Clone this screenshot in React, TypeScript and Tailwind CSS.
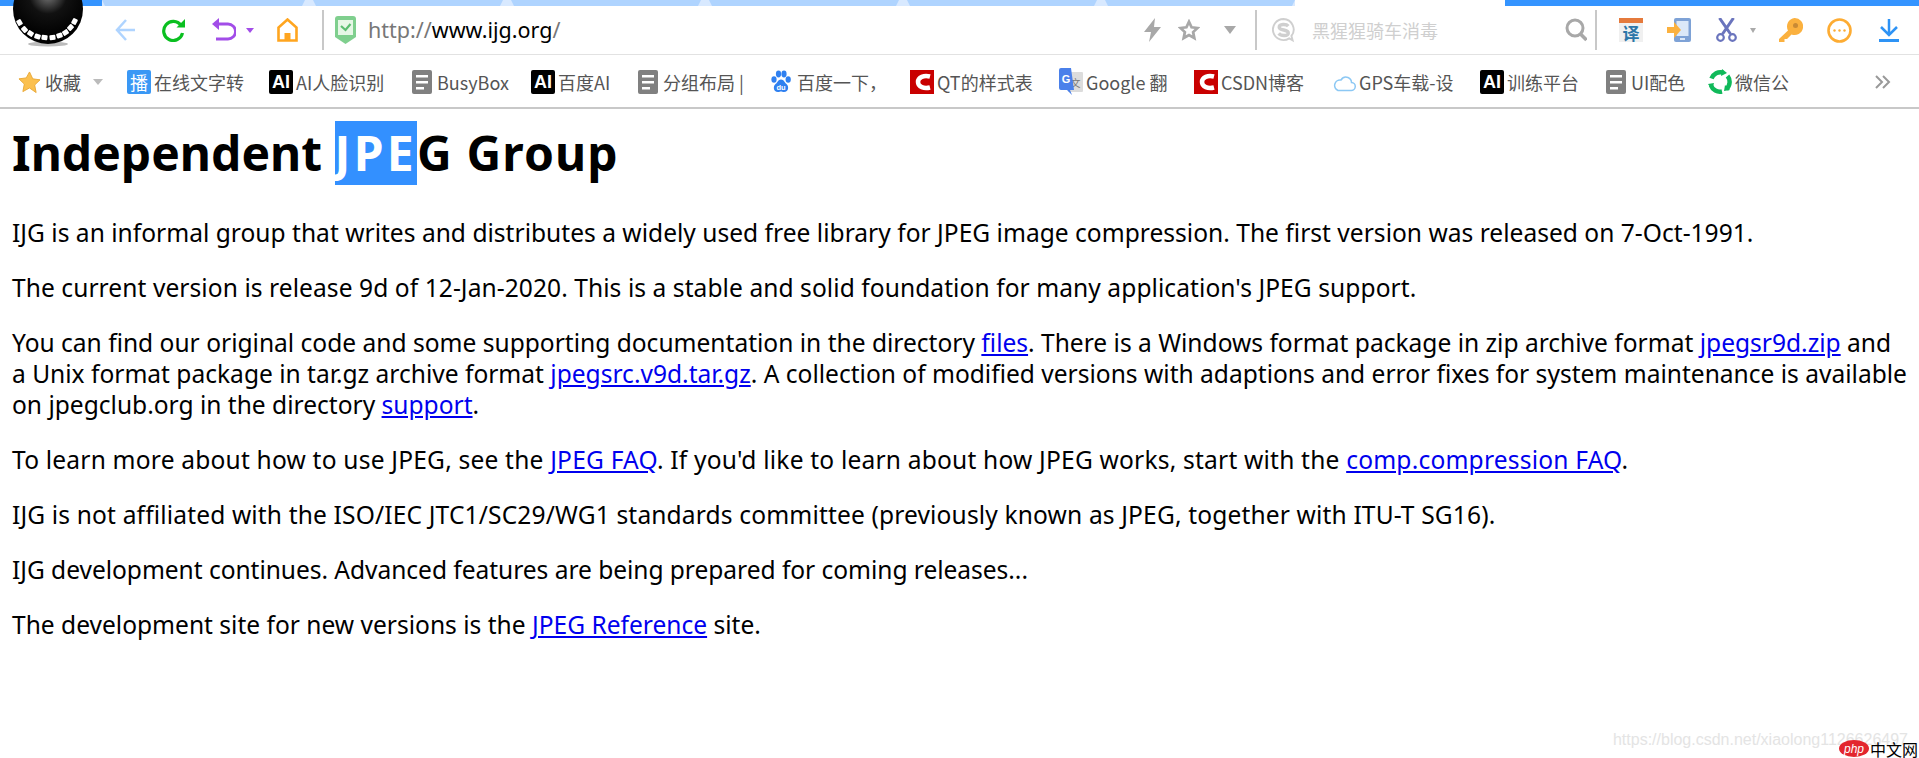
import type { ReactNode } from "react";

const cjk = "font-['Noto_Sans_CJK_SC','Noto_Sans',sans-serif]";

function AiIcon() {
  return (
    <span className="flex h-6 w-6 items-center justify-center rounded-[2px] bg-black font-['Liberation_Sans',sans-serif] text-[18px] font-bold leading-none text-white">
      AI
    </span>
  );
}

function DocIcon() {
  return (
    <svg width="22" height="24" viewBox="0 0 22 24">
      <rect x="0" y="0" width="20" height="24" rx="2" fill="#808080" />
      <rect x="4" y="5" width="12" height="2.5" fill="#fff" />
      <rect x="4" y="11" width="12" height="2.5" fill="#fff" />
      <rect x="4" y="17" width="8" height="2.5" fill="#fff" />
    </svg>
  );
}

function CsdnIcon() {
  return (
    <svg width="24" height="24" viewBox="0 0 24 24">
      <rect width="24" height="24" fill="#c90000" />
      <path d="M20 6.5C14 5 8 7 8 12s6 7 12 5.5" fill="none" stroke="#fff" strokeWidth="4.5" />
    </svg>
  );
}

function BoIcon() {
  return (
    <span className="flex h-6 w-6 items-center justify-center rounded-[2px] bg-[#3a98f5] text-[18px] leading-none text-white">
      播
    </span>
  );
}

function PawIcon() {
  return (
    <svg width="23" height="24" viewBox="0 0 23 24" fill="#2f80f0">
      <ellipse cx="3" cy="9.5" rx="2.6" ry="3.2" />
      <ellipse cx="7.5" cy="4" rx="2.6" ry="3.4" />
      <ellipse cx="13" cy="4" rx="2.6" ry="3.4" />
      <ellipse cx="17.2" cy="9.5" rx="2.6" ry="3.2" />
      <path d="M10 9.5c3 0 3.5 3 5.5 4.5 2.5 2 2.5 8-2.5 8-1.5 0-2-.6-3-.6s-1.5.6-3 .6c-5 0-5-6-2.500-8C6.500 12.500 7 9.500 10 9.500z" />
      <text x="10" y="20" textAnchor="middle" fontSize="7.500" fontWeight="700" fill="#fff" fontFamily="Liberation Sans, sans-serif">
        du
      </text>
    </svg>
  );
}

function TranslateIcon() {
  return (
    <svg width="24" height="28" viewBox="0 0 24 28">
      <rect x="9" y="4" width="15" height="20" rx="1" fill="#dcdcdc" />
      <text x="16.500" y="19" textAnchor="middle" fontSize="10" fill="#777" fontFamily="Noto Sans CJK SC, sans-serif">
        文
      </text>
      <path d="M2 0h10l3 22H11l2 5-5-5H2a2 2 0 0 1-2-2V2a2 2 0 0 1 2-2z" fill="#4a80ea" />
      <text x="7" y="15" textAnchor="middle" fontSize="11" fontWeight="700" fill="#fff" fontFamily="Liberation Sans, sans-serif">
        G
      </text>
    </svg>
  );
}

function CloudIcon() {
  return (
    <svg width="24" height="22" viewBox="0 0 24 22" fill="none" stroke="#8cc8f4" strokeWidth="1.500">
      <path d="M6 19.500h13a4 4 0 0 0 .5-8 5.500 5.500 0 0 0-3.500-5 6 6 0 0 0-7 2.500A5.500 5.500 0 0 0 6 19.500z" />
    </svg>
  );
}

function WechatIcon() {
  return (
    <svg width="24" height="26" viewBox="0 0 24 26" fill="none" stroke="#10b95a" strokeWidth="4.500">
      <path d="M3.500 9.500A9.500 9.500 0 0 1 15 3.500" />
      <path d="M19.500 7A9.500 9.500 0 0 1 18.500 20" />
      <path d="M14 22.500A9.500 9.500 0 0 1 3 16.500" />
      <path d="M14 0l5 4-6 3zM22 21l-6 1 1-6zM0 15l6-1-2 7z" fill="#10b95a" stroke="none" />
    </svg>
  );
}

function StarIcon() {
  return (
    <svg width="23" height="23" viewBox="0 0 24 24">
      <path d="M12 1l3.400 7.200 7.600 1-5.600 5.400 1.500 7.900L12 17.700 5.100 21.500l1.500-7.900L1 8.200l7.600-1z" fill="#fbc04f" stroke="#e9a93a" strokeWidth="1" />
    </svg>
  );
}

function Caret({ className }: { className: string }) {
  return <span className={`h-0 w-0 border-x-transparent border-b-0 ${className}`} />;
}

function Divider({ className }: { className: string }) {
  return <span className={`h-10 w-[2px] bg-[#c8c8c8] ${className}`} />;
}

function Logo() {
  const teeth = [
    [20, 23, 60], [25, 30, 48], [31, 34, 32], [38, 37, 20], [45, 38, 7], [53, 38, -6], [60, 36, -18], [66, 33, -32], [71, 28, -46], [75, 22, -62],
  ];
  return (
    <svg className="absolute left-[10px] top-0" width="76" height="48" viewBox="0 0 76 48">
      <defs>
        <radialGradient id="ball" cx="0.5" cy="0.3" r="0.6">
          <stop offset="0" stopColor="#777" />
          <stop offset="0.45" stopColor="#111" />
          <stop offset="1" stopColor="#000" />
        </radialGradient>
      </defs>
      <ellipse cx="38" cy="44" rx="20" ry="2.500" fill="#bbb" />
      <circle cx="38" cy="9" r="35" fill="url(#ball)" />
      {teeth.map(([x, y, r], i) => (
        <rect key={i} x={x - 13.500} y={y - 3} width="6" height="5" rx="1" fill="#fff" transform={`rotate(${r} ${x - 10.500} ${y - 0.500})`} />
      ))}
    </svg>
  );
}

const bookmarks: { w: string; icon: ReactNode; label: string }[] = [
  { w: "w-[142px]", icon: <BoIcon />, label: "在线文字转" },
  { w: "w-[143px]", icon: <AiIcon />, label: "AI人脸识别" },
  { w: "w-[119px]", icon: <DocIcon />, label: "BusyBox" },
  { w: "w-[107px]", icon: <AiIcon />, label: "百度AI" },
  { w: "w-[133px]", icon: <DocIcon />, label: "分组布局 |" },
  { w: "w-[139px]", icon: <PawIcon />, label: "百度一下，" },
  { w: "w-[149px]", icon: <CsdnIcon />, label: "QT的样式表" },
  { w: "w-[135px]", icon: <TranslateIcon />, label: "Google 翻" },
  { w: "w-[138px]", icon: <CsdnIcon />, label: "CSDN博客" },
  { w: "w-[148px]", icon: <CloudIcon />, label: "GPS车载-设" },
  { w: "w-[126px]", icon: <AiIcon />, label: "训练平台" },
  { w: "w-[102px]", icon: <DocIcon />, label: "UI配色" },
  { w: "w-[177px]", icon: <WechatIcon />, label: "微信公" },
];

function Tab({ className }: { className: string }) {
  return <div className={`h-full shrink-0 bg-[#afd4ff] [clip-path:polygon(0_0,100%_0,calc(100%-3px)_100%,3px_100%)] ${className}`} />;
}

function Toolbar() {
  return (
    <div className="flex h-[49px] items-center border-b border-[#e2e2e2] pl-[115px] pr-[20px]">
      <svg width="20" height="24" viewBox="0 0 20 24" fill="none" stroke="#afd4ff" strokeWidth="2.500">
        <path d="M21 12H2M11 2 2 12l9 10" />
      </svg>
      <svg className="ml-[27px]" width="23" height="24" viewBox="0 0 23 24" fill="none">
        <path d="M19 7.500A9.500 9.500 0 1 0 20.500 15" stroke="#0abf20" strokeWidth="3.200" />
        <path d="M14.500 9.500H23V1z" fill="#0abf20" />
      </svg>
      <svg className="ml-[27px]" width="24" height="24" viewBox="0 0 24 24" fill="none">
        <path d="M5 6h11a6.500 6.500 0 0 1 0 15H4" stroke="#a24de8" strokeWidth="2.800" />
        <path d="M7 0v12L0 6z" fill="#a24de8" />
      </svg>
      <Caret className="ml-[10px] border-x-4 border-t-[5px] border-t-[#a24de8]" />
      <svg className="ml-[23px]" width="21" height="24" viewBox="0 0 21 24" fill="none">
        <path d="M1.500 22.500V9.500l9-8 9 8v13z" stroke="#ffa51f" strokeWidth="2.600" />
        <rect x="7.500" y="15" width="6" height="8" fill="#ffa51f" />
      </svg>
      <Divider className="ml-[24px]" />
      <svg className="ml-[11px]" width="21" height="28" viewBox="0 0 21 28">
        <path d="M3 0h15a3 3 0 0 1 3 3v18l-10.500 7L0 21V3a3 3 0 0 1 3-3z" fill="#7fcf8e" />
        <rect x="3" y="4" width="15" height="15" fill="#e6f7e6" />
        <path d="m6 10 4.500 4 5-6" fill="none" stroke="#5bbd70" strokeWidth="2.200" />
      </svg>
      <div className="ml-[12px] w-[776px] shrink-0 font-['Noto_Sans',sans-serif] text-[21.5px] text-[#777]">
        http://<span className="text-black">www.ijg.org</span>/
      </div>
      <svg width="17" height="24" viewBox="0 0 17 24" fill="#a8a8a8">
        <path d="M11 0 0 14h7l-2 10 12-15h-7z" />
      </svg>
      <svg className="ml-[17px]" width="22" height="22" viewBox="0 0 24 24" fill="none" stroke="#a8a8a8" strokeWidth="3">
        <path d="m12 3 2.800 6 6.500.8-4.800 4.500 1.300 6.500L12 17.500l-5.800 3.300 1.300-6.500-4.800-4.500 6.500-.8z" />
      </svg>
      <Caret className="ml-[24px] border-x-[6px] border-t-[8px] border-t-[#a8a8a8]" />
      <Divider className="ml-[19px]" />
      <svg className="ml-[15px]" width="23" height="26" viewBox="0 0 24 26" fill="none">
        <path d="M12 1.500a11 11 0 1 0 6 20.200l3.500 2-1.200-4.500A11 11 0 0 0 12 1.500z" stroke="#cfcfcf" strokeWidth="2" />
        <path d="M17 9c-2-2.500-9.500-2.500-9.500 1 0 4 9.500 2 9.500 6 0 3.500-7.500 3.500-10 .5" stroke="#cfcfcf" strokeWidth="3.500" />
      </svg>
      <div className={`ml-[17px] flex-1 text-[18px] text-[#cfcfcf] ${cjk}`}>黑猩猩骑车消毒</div>
      <svg width="22" height="24" viewBox="0 0 22 24" fill="none" stroke="#a8a8a8">
        <circle cx="10" cy="10" r="8" strokeWidth="3" />
        <path d="m15.500 16 6 6" strokeWidth="3.500" />
      </svg>
      <Divider className="ml-[8px]" />
      <div className="ml-[22px] flex h-[24px] w-[24px] flex-col bg-[#f0f0f0]">
        <div className="h-[5px] bg-[#e57a3c]" />
        <div className={`flex-1 text-center text-[17px] font-bold leading-[19px] text-[#2c76a8] ${cjk}`}>译</div>
      </div>
      <svg className="ml-[24px]" width="24" height="24" viewBox="0 0 24 24">
        <rect x="7" y="0" width="17" height="24" rx="2" fill="#7ea2d6" />
        <rect x="9.500" y="3" width="12" height="15" fill="#dbe8f8" />
        <rect x="13" y="20" width="5" height="2" fill="#dbe8f8" />
        <path d="M0 9h7V4l7 8-7 8v-5H0z" fill="#fbb13f" />
      </svg>
      <svg className="ml-[25px]" width="21" height="24" viewBox="0 0 21 24" fill="none" stroke="#6a74bd">
        <path d="M17.500 0 6.500 16M3.500 0l11 16" strokeWidth="3" />
        <circle cx="4.500" cy="19.500" r="3.300" strokeWidth="2.200" />
        <circle cx="16.500" cy="19.500" r="3.300" strokeWidth="2.200" />
      </svg>
      <Caret className="ml-[13px] border-x-[3.500px] border-t-[5px] border-t-[#aaa]" />
      <svg className="ml-[23px]" width="24" height="24" viewBox="0 0 24 24" fill="#fbb13f">
        <path d="M15.500 0a8.500 8.500 0 1 1-3 16.400L8 21H5.500v3H0v-3l9-8.500A8.500 8.500 0 0 1 15.500 0z" />
        <circle cx="16.500" cy="7.500" r="2.500" fill="#c98a35" />
      </svg>
      <svg className="ml-[24px]" width="25" height="25" viewBox="0 0 25 25" fill="none">
        <circle cx="12.500" cy="12.500" r="11" stroke="#fdac33" strokeWidth="2.600" />
        <circle cx="7.500" cy="12.500" r="1.200" fill="#fdac33" />
        <circle cx="12.500" cy="12.500" r="1.200" fill="#fdac33" />
        <circle cx="17.500" cy="12.500" r="1.200" fill="#fdac33" />
      </svg>
      <svg className="ml-[27px]" width="20" height="24" viewBox="0 0 20 24" fill="none" stroke="#2e93f5" strokeWidth="2.500">
        <path d="M10 1v15M2 9l8 8 8-8" />
        <path d="M0 22.500h20" strokeWidth="3" />
      </svg>
    </div>
  );
}

function Bookmarks() {
  return (
    <div className={`flex h-[54px] items-center border-b-2 border-[#c8c8c8] pl-[18px] pt-[2px] text-[18px] text-[#555] ${cjk}`}>
      <StarIcon />
      <span className="ml-[4px]">收藏</span>
      <Caret className="ml-[12px] border-x-[5px] border-t-[6px] border-t-[#bbb]" />
      <div className="ml-[24px] flex">
        {bookmarks.map((b, i) => (
          <div key={i} className={`flex items-center gap-[3px] overflow-hidden whitespace-nowrap ${b.w}`}>
            <span className="flex shrink-0">{b.icon}</span>
            <span>{b.label}</span>
          </div>
        ))}
      </div>
      <svg className="-ml-[10px]" width="16" height="14" viewBox="0 0 16 14" fill="none" stroke="#999" strokeWidth="2">
        <path d="m1 1 6 6-6 6M8 1l6 6-6 6" />
      </svg>
    </div>
  );
}

function Link({ children }: { children: ReactNode }) {
  return <span className="text-[#0000ee] underline">{children}</span>;
}

export default function App() {
  return (
    <div className="relative h-[758px] w-full overflow-hidden bg-white">
      <div className="flex h-[6px] bg-white">
        <div className="h-full w-[102px] shrink-0 bg-[#3494ff]" />
        <div className="flex h-full gap-[8px] bg-[#d8e9ff]">
          <Tab className="w-[203px]" />
          <Tab className="w-[190px]" />
          <Tab className="w-[190px]" />
          <Tab className="w-[190px]" />
          <Tab className="w-[190px]" />
          <Tab className="w-[190px]" />
        </div>
        <div className="ml-auto h-full w-[414px] bg-[#3494ff]" />
      </div>
      <Logo />
      <Toolbar />
      <Bookmarks />

      <main className="px-3 font-['Noto_Sans',sans-serif] text-[24.55px] leading-[31px] text-black">
        <h1 className="mt-[12px] whitespace-nowrap text-[48px] font-bold leading-[64px]">
          Independent{" "}
          <span className="inline-block h-[64px] bg-[#3390ff] tracking-[3.3px] text-white">JPE</span>
          <span className="tracking-[1.1px]">G Group</span>
        </h1>
        <div className="mt-[32px] flex flex-col gap-[24px] whitespace-nowrap">
          <p className="tracking-[0.015px]">IJG is an informal group that writes and distributes a widely used free library for JPEG image compression. The first version was released on 7-Oct-1991.</p>
          <p className="tracking-[0.07px]">The current version is release 9d of 12-Jan-2020. This is a stable and solid foundation for many application's JPEG support.</p>
          <p>
            You can find our original code and some supporting documentation in the directory <Link>files</Link>. There is a Windows format package in zip archive format <Link>jpegsr9d.zip</Link> and
            <br />
            a Unix format package in tar.gz archive format <Link>jpegsrc.v9d.tar.gz</Link>. A collection of modified versions with adaptions and error fixes for system maintenance is available
            <br />
            on jpegclub.org in the directory <Link>support</Link>.
          </p>
          <p className="tracking-[0.2px]">To learn more about how to use JPEG, see the <Link>JPEG FAQ</Link>. If you'd like to learn about how JPEG works, start with the <Link>comp.compression FAQ</Link>.</p>
          <p className="tracking-[0.15px]">IJG is not affiliated with the ISO/IEC JTC1/SC29/WG1 standards committee (previously known as JPEG, together with ITU-T SG16).</p>
          <p className="tracking-[-0.04px]">IJG development continues. Advanced features are being prepared for coming releases...</p>
          <p>The development site for new versions is the <Link>JPEG Reference</Link> site.</p>
        </div>
      </main>

      <div className="absolute bottom-[8px] right-[11px] font-['Liberation_Sans',sans-serif] text-[16px] leading-[20px] text-[#e4e4e4]">
        https://blog.csdn.net/xiaolong1126626497
      </div>
      <div className="absolute bottom-0 right-[1px] flex h-[19px] items-center">
        <span className="flex h-[17px] w-[30px] items-center justify-center rounded-[50%] bg-[#e3262e] font-['Liberation_Sans',sans-serif] text-[12px] italic leading-none text-white">
          php
        </span>
        <span className={`ml-[1px] text-[16px] leading-none text-black ${cjk}`}>中文网</span>
      </div>
    </div>
  );
}
